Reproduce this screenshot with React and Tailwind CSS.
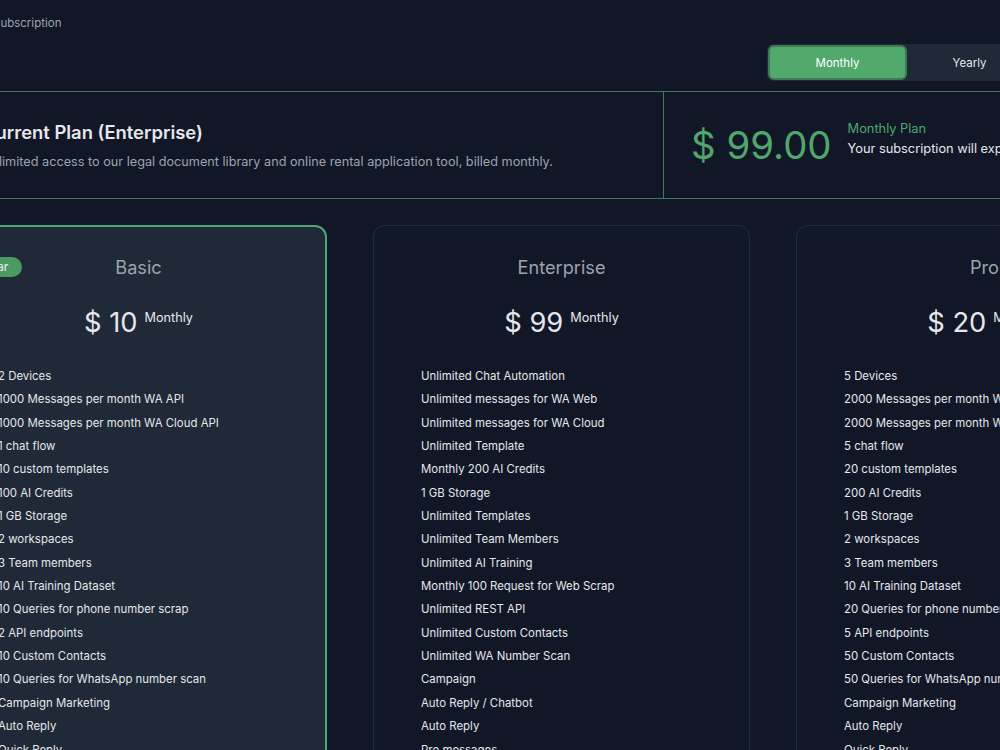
import React from 'react'

const plans=[
  {
    name:"Basic",price:"10",popular:true,
    features:["2 Devices","1000 Messages per month WA API","1000 Messages per month WA Cloud API","1 chat flow","10 custom templates","100 AI Credits","1 GB Storage","2 workspaces","3 Team members","10 AI Training Dataset","10 Queries for phone number scrap","2 API endpoints","10 Custom Contacts","10 Queries for WhatsApp number scan","Campaign Marketing","Auto Reply","Quick Reply"],
  },
  {
    name:"Enterprise",price:"99",
    features:["Unlimited Chat Automation","Unlimited messages for WA Web","Unlimited messages for WA Cloud","Unlimited Template","Monthly 200 AI Credits","1 GB Storage","Unlimited Templates","Unlimited Team Members","Unlimited AI Training","Monthly 100 Request for Web Scrap","Unlimited REST API","Unlimited Custom Contacts","Unlimited WA Number Scan","Campaign","Auto Reply / Chatbot","Auto Reply","Pro messages"],
  },
  {
    name:"Pro",price:"20",
    features:["5 Devices","2000 Messages per month WA API","2000 Messages per month WA Cloud API","5 chat flow","20 custom templates","200 AI Credits","1 GB Storage","2 workspaces","3 Team members","10 AI Training Dataset","20 Queries for phone number scrap","5 API endpoints","50 Custom Contacts","50 Queries for WhatsApp number scan","Campaign Marketing","Auto Reply","Quick Reply"],
  },
]

const PlanCard=({plan})=>{
  return (
    <div className={`relative w-[377px] shrink-0 rounded-xl ${plan.popular ? "border-2 border-[#4fa76b] bg-[#1f2937] px-[46px] pt-[26px]" : "border border-[#232b3b] px-[47px] pt-[27px]"}`}>
      {plan.popular && (
        <span className="absolute left-0 top-[30px] rounded-full bg-[#4a9a62] px-[14px] text-[11.5px] font-medium leading-[20px] text-[#e5e7eb]">Popular</span>
      )}
      <h3 className="text-center text-[18.2px] leading-[28px] text-[#9ca3af]">{plan.name}</h3>
      <div className="mt-[20px] flex justify-center">
        <span className="text-[27.3px] leading-[44px] text-[#e5e7eb]">$ {plan.price}</span>
        <span className="ml-[7px] text-[12.7px] leading-[34px] text-[#e5e7eb]">Monthly</span>
      </div>
      <ul className="mt-[20px] flex flex-col">
        {plan.features.map((f,i)=>(
          <li key={i} className="whitespace-nowrap text-[11.42px] leading-[23.35px] text-[#e5e7eb]">{f}</li>
        ))}
      </ul>
    </div>
  )
}

const App = () => {
  return (
    <div className="h-[750px] w-[1000px] overflow-hidden bg-[#111727] font-['Inter',sans-serif]">
      <div className="ml-[-50px] w-[1222px]">
        <div className="flex h-[91px] items-start justify-between">
          <p className="ml-[43px] mt-[15px] text-[11.5px] leading-[16px] text-[#9ca3af]">Subscription</p>
          <div className="mr-[141px] mt-[44px] flex h-[37px] w-[264px] rounded-md bg-[#1f2937] text-[11.5px]">
            <button className="m-[1px] h-[35px] w-[140px] rounded-md border-2 border-[#3f7a58] bg-[#52a96c] pt-[2px] text-white">Monthly</button>
            <button className="w-[124px] pt-[2px] text-[#e5e7eb]">Yearly</button>
          </div>
        </div>
        <div className="flex h-[108px] border-y border-y-[#3f7a58]">
          <div className="w-[714px] border-r border-r-[#3f7a58] pl-[32px] pt-[28px]">
            <h2 className="text-[18.4px] font-semibold leading-[24px] text-[#e5e7eb]">Current Plan (Enterprise)</h2>
            <p className="mt-[8px] text-[12.7px] leading-[20px] text-[#9ca3af]">Unlimited access to our legal document library and online rental application tool, billed monthly.</p>
          </div>
          <div className="flex items-center pl-[27px]">
            <span className="text-[38.4px] leading-[48px] text-[#4fa76b]">$ 99.00</span>
            <div className="mb-[12px] ml-[16px]">
              <p className="text-[12.8px] leading-[20px] text-[#4fa76b]">Monthly Plan</p>
              <p className="whitespace-nowrap text-[12.8px] leading-[20px] text-[#e5e7eb]">Your subscription will expire soon</p>
            </div>
          </div>
        </div>
        <div className="mt-[26px] flex gap-[46px]">
          {plans.map(p=><PlanCard key={p.name} plan={p}/>)}
        </div>
      </div>
    </div>
  )
}

export default App
